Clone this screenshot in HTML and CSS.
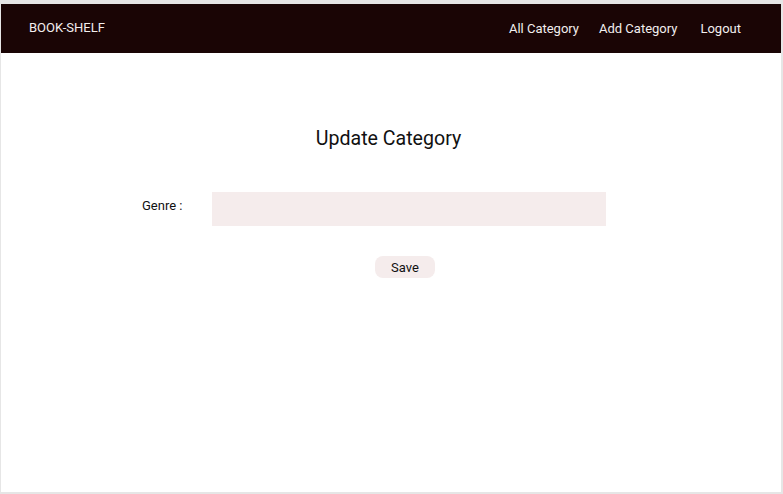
FILE: index.html
```html
<!DOCTYPE html>
<html lang="en">
<head>
<meta charset="utf-8">
<title>Book-Shelf</title>
<link rel="stylesheet" href="styles.css">
</head>
<body>
<div class="frame">
  <nav class="navbar">
    <a class="brand" href="#">BOOK-SHELF</a>
    <ul class="nav-links">
      <li><a href="#">All Category</a></li>
      <li><a href="#">Add Category</a></li>
      <li><a href="#">Logout</a></li>
    </ul>
  </nav>
  <main class="content">
    <h1 class="title">Update Category</h1>
    <form class="form">
      <div class="row">
        <label class="label" for="genre">Genre :</label>
        <input class="input" id="genre" type="text">
      </div>
      <div class="actions">
        <button class="btn" type="button">Save</button>
      </div>
    </form>
  </main>
</div>
</body>
</html>
```
FILE: styles.css
```css
* { box-sizing: border-box; }
html, body { margin: 0; height: 100%; }
body {
  background: #e6e6e6;
  padding: 4px 2px 2px 1px;
  font-family: Roboto, "Liberation Sans", Arial, sans-serif;
}
.frame {
  height: 100%;
  background: #ffffff;
  display: flex;
  flex-direction: column;
}
.navbar {
  height: 49px;
  background: #1a0505;
  display: flex;
  align-items: center;
  justify-content: space-between;
  padding: 0 40px 3px 28px;
}
.brand {
  color: #f2eeee;
  text-decoration: none;
  font-size: 13px;
}
.nav-links {
  list-style: none;
  margin: 0;
  padding: 0;
  display: flex;
  gap: 20px;
}
.nav-links li:last-child { margin-left: 3px; }
.nav-links a {
  color: #f2eeee;
  text-decoration: none;
  font-size: 13px;
}
.content {
  display: flex;
  flex-direction: column;
  align-items: center;
}
.title {
  margin: 74px 0 0;
  font-size: 19.6px;
  font-weight: 400;
  color: #111;
  line-height: 24px;
  padding-right: 5px;
}
.form {
  width: 100%;
  margin-top: 41px;
}
.row {
  display: flex;
  align-items: center;
  padding-left: 141px;
}
.label {
  width: 70px;
  font-size: 13px;
  color: #111;
  margin-top: -8px;
}
.input {
  width: 394px;
  height: 34px;
  border: none;
  background: #f5ecec;
  outline: none;
}
.actions {
  display: flex;
  justify-content: center;
  margin-top: 30px;
  padding-left: 28px;
}
.btn {
  width: 60px;
  height: 22px;
  border: none;
  border-radius: 8px;
  background: #f5ecec;
  font-family: Roboto, "Liberation Sans", Arial, sans-serif;
  font-size: 13px;
  color: #111;
  padding: 0;
}
```
